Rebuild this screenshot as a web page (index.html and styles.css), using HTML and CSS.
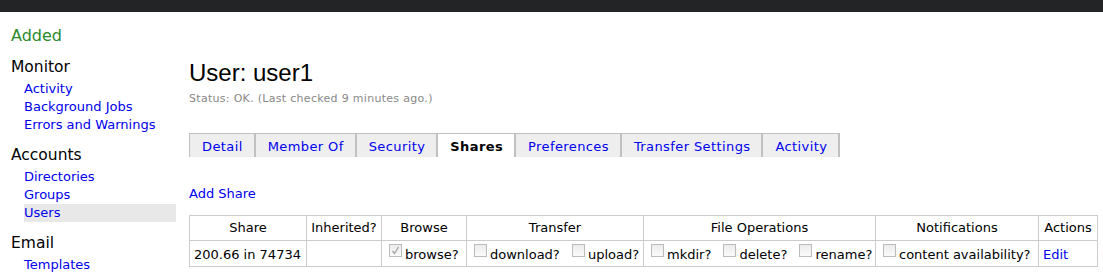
FILE: index.html
```html
<!DOCTYPE html>
<html lang="en">
<head>
    <meta charset="UTF-8">
    <title>User: user1</title>
    <link rel="stylesheet" href="styles.css">
</head>
<body>
<div class="topbar"></div>

<div class="page">
    <!-- Sidebar navigation -->
    <div class="sidebar">
        <p class="flash">Added</p>

        <h3>Monitor</h3>
        <ul>
            <li><a href="#">Activity</a></li>
            <li><a href="#">Background Jobs</a></li>
            <li><a href="#">Errors and Warnings</a></li>
        </ul>

        <h3>Accounts</h3>
        <ul>
            <li><a href="#">Directories</a></li>
            <li><a href="#">Groups</a></li>
            <li class="current"><a href="#">Users</a></li>
        </ul>

        <h3>Email</h3>
        <ul>
            <li><a href="#">Templates</a></li>
        </ul>
    </div>

    <!-- User details -->
    <div class="main">
        <h1>User: user1</h1>
        <p class="status">Status: OK. (Last checked 9 minutes ago.)</p>

        <ul class="tabs">
            <li><a href="#">Detail</a></li>
            <li><a href="#">Member Of</a></li>
            <li><a href="#">Security</a></li>
            <li class="active"><a href="#">Shares</a></li>
            <li><a href="#">Preferences</a></li>
            <li><a href="#">Transfer Settings</a></li>
            <li><a href="#">Activity</a></li>
        </ul>

        <p class="add"><a href="#">Add Share</a></p>

        <table class="shares">
            <colgroup>
                <col class="c-share">
                <col class="c-inherited">
                <col class="c-browse">
                <col class="c-transfer">
                <col class="c-fileops">
                <col class="c-notify">
                <col class="c-actions">
                <col class="c-extra">
            </colgroup>
            <thead>
            <tr>
                <th>Share</th>
                <th>Inherited?</th>
                <th>Browse</th>
                <th>Transfer</th>
                <th>File Operations</th>
                <th>Notifications</th>
                <th>Actions</th>
                <th class="extra"></th>
            </tr>
            </thead>
            <tbody>
            <tr>
                <td>200.66 in 74734</td>
                <td></td>
                <td>
                    <label class="opt"><span class="box checked"><svg viewBox="0 0 11 11"><path d="M2.5 6 L4.5 8.5 L8.5 2" fill="none" stroke="#a8a8a8" stroke-width="1.4"/></svg></span>browse?</label>
                </td>
                <td>
                    <label class="opt"><span class="box"></span>download?</label>
                    <label class="opt"><span class="box"></span>upload?</label>
                </td>
                <td>
                    <label class="opt"><span class="box"></span>mkdir?</label>
                    <label class="opt"><span class="box"></span>delete?</label>
                    <label class="opt"><span class="box"></span>rename?</label>
                </td>
                <td>
                    <label class="opt"><span class="box"></span>content availability?</label>
                </td>
                <td><a href="#">Edit</a></td>
                <td class="extra"><a href="#">info</a></td>
            </tr>
            </tbody>
        </table>
    </div>
</div>
</body>
</html>
```

FILE: styles.css
```css
body {
    margin: 0;
    font-family: "DejaVu Sans", Verdana, sans-serif;
    font-size: 13px;
    color: #000;
    background: #fff;
    overflow: hidden;
}
a {
    color: #0000ee;
    text-decoration: none;
}
.topbar {
    height: 12px;
    background-color: #232425;
}
.page {
    display: flex;
    align-items: flex-start;
}

/* Sidebar */
.sidebar {
    flex: none;
    width: 176px;
    box-sizing: border-box;
    padding: 14px 0 0 11px;
}
.flash {
    margin: 0;
    font-size: 16px;
    line-height: 20px;
    color: #2a8a2a;
}
.sidebar h3 {
    margin: 10px 0 4px;
    font-size: 15.5px;
    line-height: 20px;
    font-weight: normal;
    padding-top: 1px;
    height: 19px;
}
.sidebar ul {
    list-style: none;
    margin: 0;
    padding: 0 0 0 13px;
}
.sidebar li a {
    display: block;
    line-height: 18px;
}
.sidebar li.current {
    background-color: #e8e8e8;
}

/* Main area */
.main {
    flex: none;
    margin-left: 13px;
}
.main h1 {
    margin: 47px 0 0;
    font-family: "Liberation Sans", Arial, sans-serif;
    font-size: 24px;
    line-height: 28px;
    font-weight: normal;
}
.status {
    margin: 5px 0 0;
    font-size: 11px;
    line-height: 14px;
    letter-spacing: 0.3px;
    color: #888;
}

/* Tabs */
.tabs {
    display: flex;
    list-style: none;
    margin: 27px 0 0;
    padding: 0;
}
.tabs li a {
    display: block;
    padding: 5px 11px 2px 12px;
    line-height: 16px;
    letter-spacing: 0.4px;
    background-color: #eeeeee;
    border-top: 1px solid #c0c0c0;
    border-right: 2px solid #c0c0c0;
}
.tabs li:first-child a {
    border-left: 1px solid #c0c0c0;
}
.tabs li.active a {
    background-color: #fff;
    color: #000;
    font-weight: bold;
}

.add {
    margin: 28px 0 0;
    line-height: 18px;
}

/* Shares table */
.shares {
    margin-top: 12px;
    border-collapse: collapse;
    table-layout: fixed;
    width: 958px;
}
.c-share { width: 117px; }
.c-inherited { width: 75px; }
.c-browse { width: 85px; }
.c-transfer { width: 177px; }
.c-fileops { width: 232px; }
.c-notify { width: 163px; }
.c-actions { width: 59px; }
.c-extra { width: 50px; }

.shares th, .shares td {
    border: 1px solid #cccccc;
    line-height: 16px;
    white-space: nowrap;
    overflow: hidden;
}
.shares th {
    padding: 4px;
    font-weight: normal;
    text-align: center;
}
.shares td {
    padding: 3px 4px;
    text-align: left;
    vertical-align: baseline;
}
.shares .extra {
    border: none;
}
.opt + .opt {
    margin-left: 5px;
}
.box {
    display: inline-block;
    width: 13px;
    height: 13px;
    box-sizing: border-box;
    margin: 0 3px;
    vertical-align: 2px;
    border: 1px solid #bcbcbc;
    background: linear-gradient(#ececec, #fafafa);
}
.box svg {
    display: block;
    width: 11px;
    height: 11px;
}
```
